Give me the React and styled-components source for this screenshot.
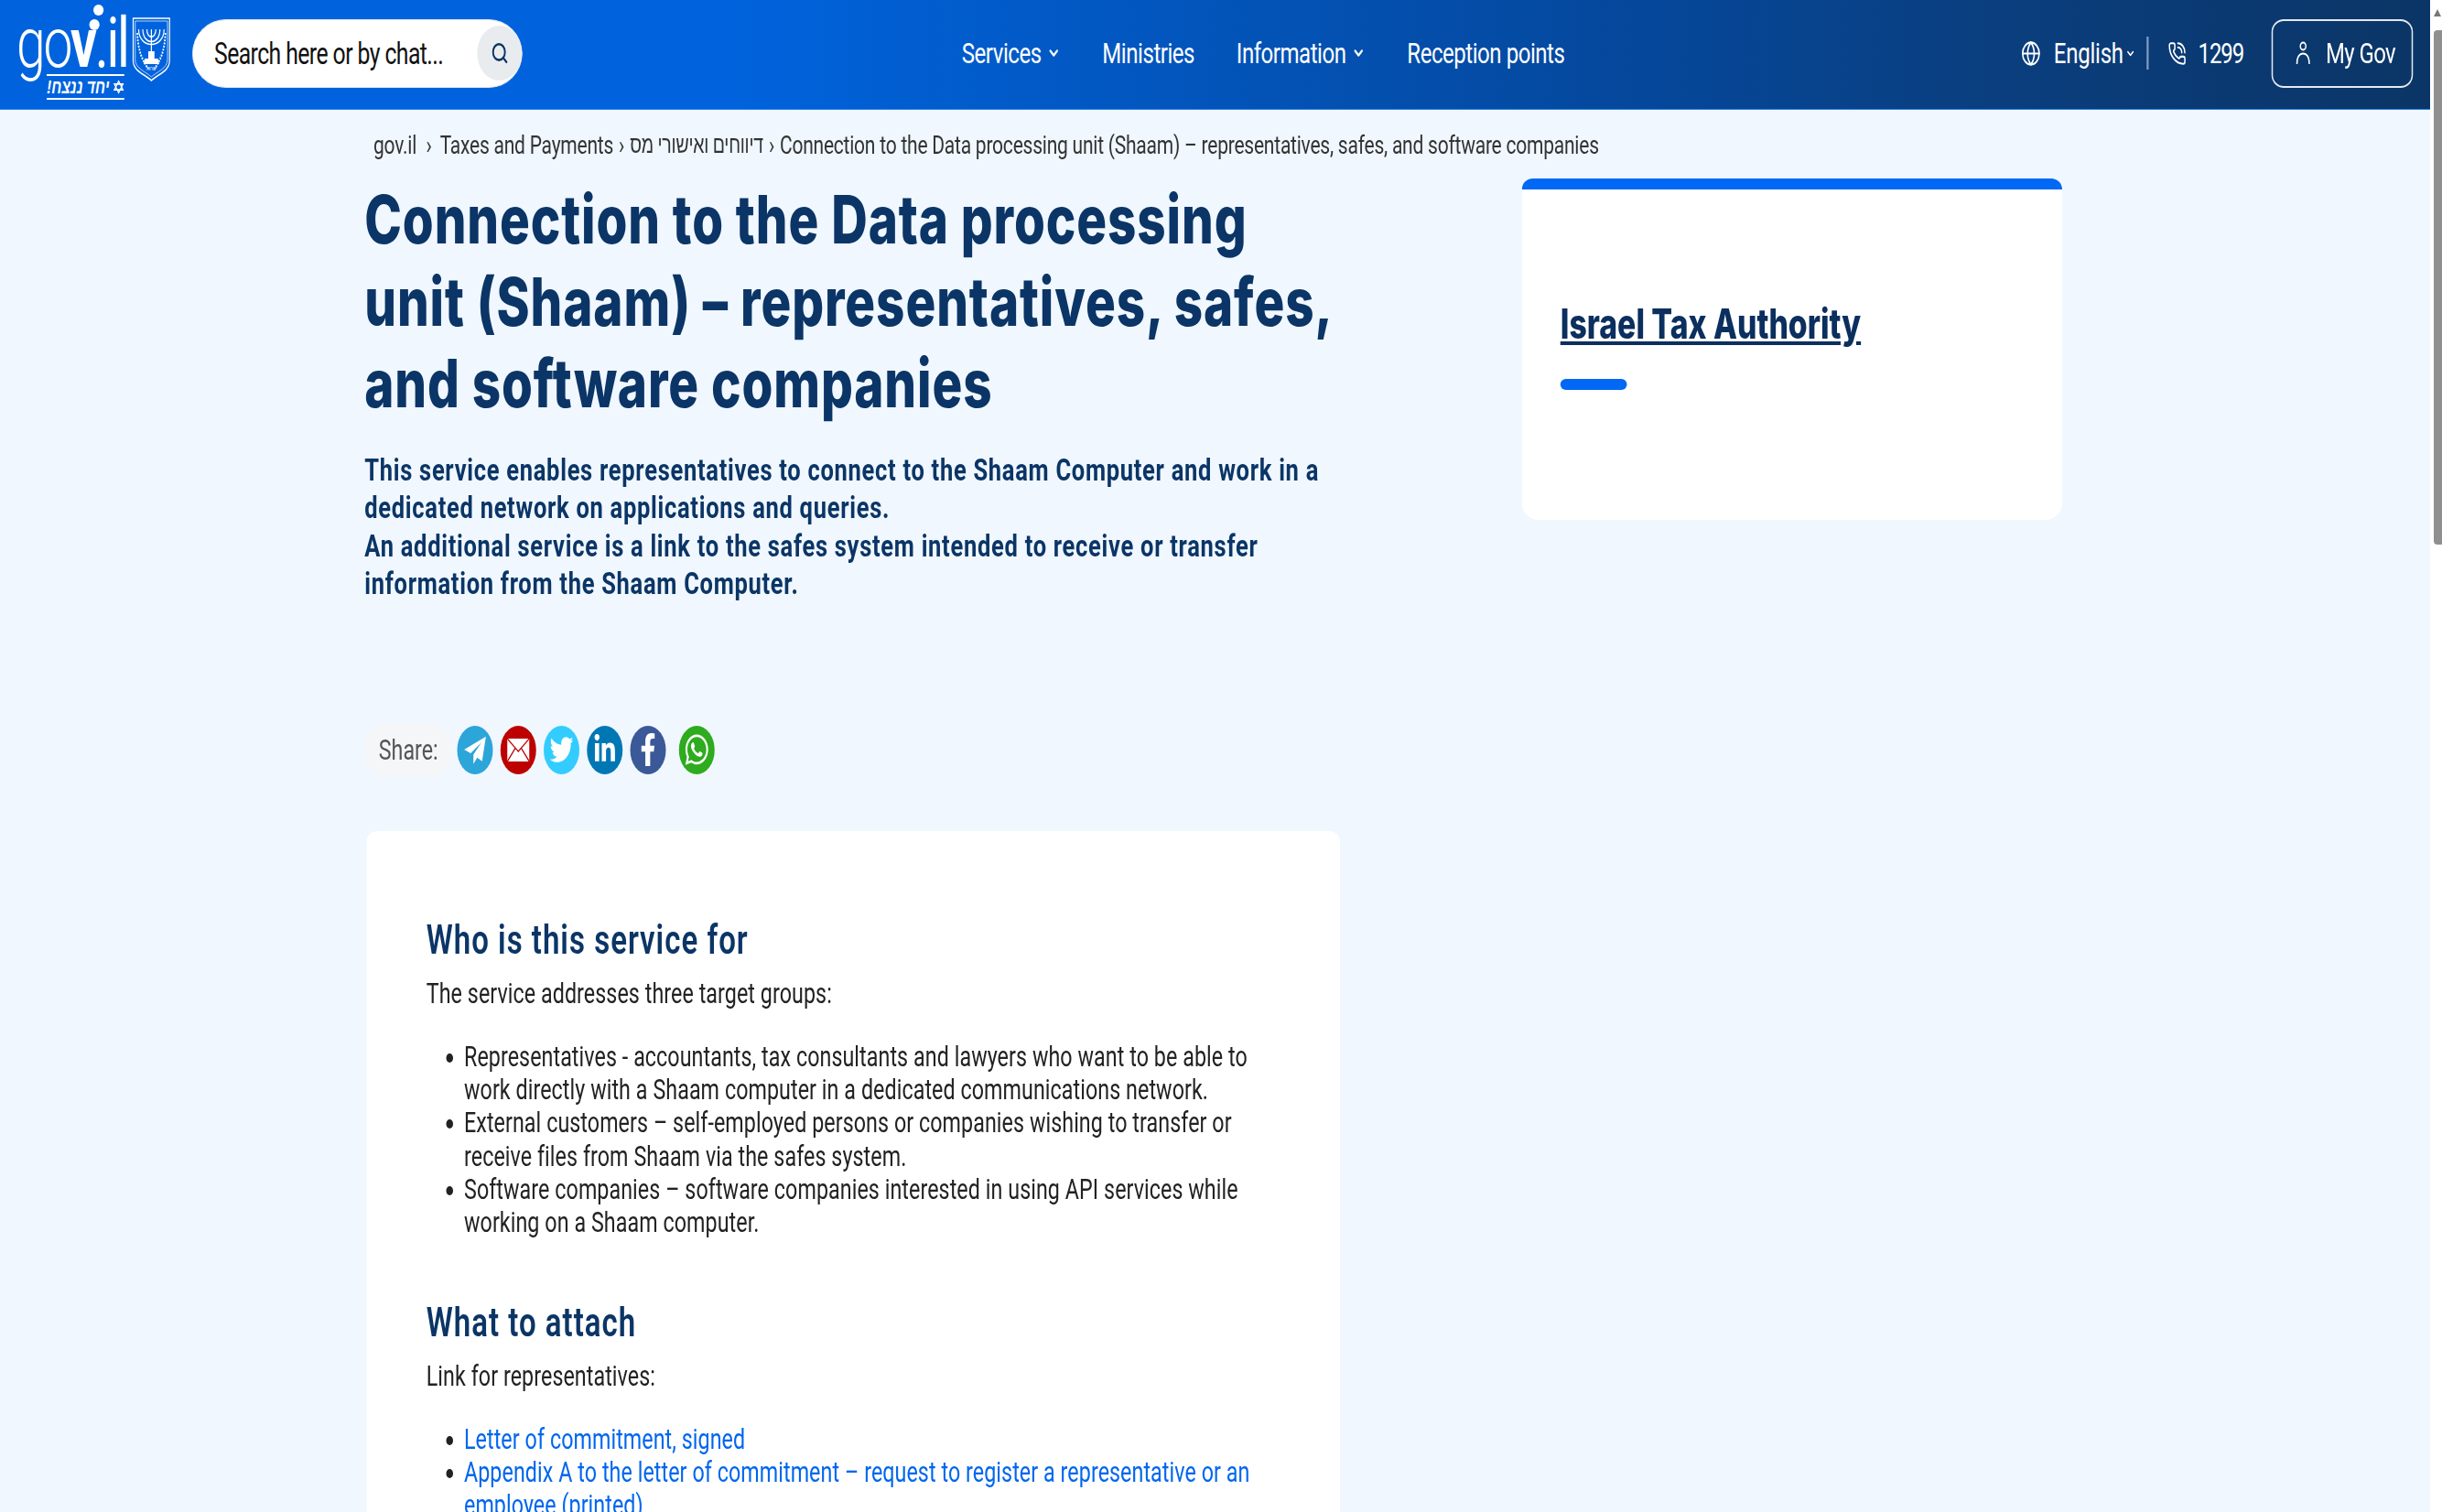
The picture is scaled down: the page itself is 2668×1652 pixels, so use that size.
import styled, { createGlobalStyle } from "styled-components";
import { ChevronDown, Globe, PhoneCall, Search } from "lucide-react";
import { FaFacebookF, FaLinkedinIn, FaTwitter, FaWhatsapp } from "react-icons/fa";

const Global = createGlobalStyle`
  html, body {
    margin: 0;
    overflow: hidden;
    background: #fff;
  }
  * {
    box-sizing: border-box;
  }
`;

function Emblem() {
  return (
    <EmblemSvg viewBox="0 0 57 71" preserveAspectRatio="none" fill="none" stroke="#fff">
      <path d="M2 2H55V48C55 60 38 63 28.5 70C19 63 2 60 2 48Z" strokeWidth="1.6" />
      <path d="M5 5H52V47C52 57 37 60 28.5 66C20 60 5 57 5 47Z" strokeWidth="0.8" />
      <path d="M28.5 14V38M22 14C22 25 35 25 35 14M16 14C16 32 41 32 41 14M10 14C10 36 47 36 47 14" strokeWidth="1.6" />
      <path d="M19 46H38L40 52H17ZM24 38H33V46H24Z" fill="#fff" stroke="none" />
      <path d="M8 18C9 34 13 46 24 57M49 18C48 34 44 46 33 57" strokeWidth="2.4" strokeDasharray="2 1.5" />
      <text x="28.5" y="59" textAnchor="middle" fontSize="6" fill="#fff" stroke="none" fontFamily="Liberation Sans, sans-serif">ישראל</text>
    </EmblemSvg>
  );
}

function MailIcon() {
  return (
    <svg width="38" height="30" viewBox="0 0 34 30">
      <rect x="1" y="3" width="32" height="25" fill="#fff" />
      <path d="M1 3L17 17L33 3M1 28L13 13M33 28L21 13" stroke="#bd0000" strokeWidth="1.6" fill="none" />
    </svg>
  );
}

function PlaneIcon() {
  return (
    <svg width="42" height="38" viewBox="0 0 24 24">
      <path d="M22 3L2 12L8 14.5L18 7L10.5 15.5V22L14 17.5L18.5 20Z" fill="#fff" />
    </svg>
  );
}

function UserIcon() {
  return (
    <svg width="22" height="26" viewBox="0 0 22 26" fill="none" stroke="#fff" strokeWidth="2">
      <circle cx="11" cy="5.5" r="4" />
      <path d="M2 25C2 17 6 13.5 11 13.5C16 13.5 20 17 20 25" />
    </svg>
  );
}

function Star() {
  return (
    <svg width="20" height="18" viewBox="0 0 20 18" fill="none" stroke="#fff" strokeWidth="2">
      <path d="M10 1L18 13H2Z M10 17L2 5H18Z" />
    </svg>
  );
}

const shares = [
  { color: "#2ca5d9", icon: <PlaneIcon /> },
  { color: "#bd0000", icon: <MailIcon /> },
  { color: "#33ccff", icon: <FaTwitter size={34} /> },
  { color: "#0077b5", icon: <FaLinkedinIn size={34} /> },
  { color: "#3b5998", icon: <FaFacebookF size={36} /> },
  { color: "#2eab1e", icon: <FaWhatsapp size={38} />, wide: true },
];

export default function App() {
  return (
    <Shell>
      <Global />
      <Viewport>
        <Page>
          <Header>
            <Logo>
              <Mark>
                <GovText>
                  <Thin>go</Thin>
                  <Bold>v</Bold>
                  <Thin $il>.il</Thin>
                  <Dot />
                  <Dot upper />
                </GovText>
                <Tag>
                  <span dir="rtl">יחד ננצח!</span>
                  <Star />
                </Tag>
              </Mark>
              <Emblem />
            </Logo>
            <SearchBox>
              <SearchLabel>Search here or by chat...</SearchLabel>
              <SearchButton>
                <Search size={26} strokeWidth={2.4} />
              </SearchButton>
            </SearchBox>
            <Nav>
              <NavItem>
                Services <ChevronDown size={20} strokeWidth={3} />
              </NavItem>
              <NavItem>Ministries</NavItem>
              <NavItem>
                Information <ChevronDown size={20} strokeWidth={3} />
              </NavItem>
              <NavItem>Reception points</NavItem>
            </Nav>
            <Tools>
              <Globe size={29} strokeWidth={1.8} />
              <Lang>
                English <ChevronDown size={15} strokeWidth={3} />
              </Lang>
              <Divider />
              <PhoneCall size={27} strokeWidth={1.8} />
              <Phone>1299</Phone>
              <GovButton>
                <UserIcon />
                My Gov
              </GovButton>
            </Tools>
          </Header>

          <Main>
            <Breadcrumb>
              <span>gov.il</span>
              <Sep first>›</Sep>
              <span>Taxes and Payments</span>
              <Sep>›</Sep>
              <HebrewCrumb>דיווחים ואישורי מס</HebrewCrumb>
              <Sep>›</Sep>
              <span>Connection to the Data processing unit (Shaam) – representatives, safes, and software companies</span>
            </Breadcrumb>
            <Columns>
              <div>
                <Title>Connection to the Data processing unit (Shaam) – representatives, safes, and software companies</Title>
                <Lead>
                  This service enables representatives to connect to the Shaam Computer and work in a dedicated network on applications and queries.
                  <br />
                  An additional service is a link to the safes system intended to receive or transfer information from the Shaam Computer.
                </Lead>
                <ShareRow>
                  <ShareLabel>Share:</ShareLabel>
                  {shares.map((s) => (
                    <ShareIcon key={s.color} $color={s.color} $wide={s.wide}>
                      {s.icon}
                    </ShareIcon>
                  ))}
                </ShareRow>
                <Card>
                  <SectionTitle>Who is this service for</SectionTitle>
                  <Para>The service addresses three target groups:</Para>
                  <List>
                    <li>Representatives - accountants, tax consultants and lawyers who want to be able to work directly with a Shaam computer in a dedicated communications network.</li>
                    <li>External customers – self-employed persons or companies wishing to transfer or receive files from Shaam via the safes system.</li>
                    <li>Software companies – software companies interested in using API services while working on a Shaam computer.</li>
                  </List>
                  <SectionTitle $next>What to attach</SectionTitle>
                  <Para>Link for representatives:</Para>
                  <List>
                    <li>
                      <DocLink>Letter of commitment, signed</DocLink>
                    </li>
                    <li>
                      <DocLink>Appendix A to the letter of commitment – request to register a representative or an employee (printed)</DocLink>
                    </li>
                  </List>
                </Card>
              </div>
              <Side>
                <SideBar />
                <SideTitle>Israel Tax Authority</SideTitle>
                <SideMark />
              </Side>
            </Columns>
          </Main>
        </Page>
      </Viewport>
      <ScrollRail>
        <ScrollArrow />
        <ScrollThumb />
      </ScrollRail>
    </Shell>
  );
}

const Shell = styled.div`
  display: flex;
  height: 100vh;
  overflow: hidden;
  background: #fff;
`;

const Viewport = styled.div`
  width: 2655px;
  flex-shrink: 0;
  overflow: hidden;
  background: #f0f7ff;
`;

const ScrollRail = styled.div`
  display: flex;
  flex-direction: column;
  flex: 1;
  padding: 10px 0 0 4px;
`;

const ScrollArrow = styled.i`
  width: 0;
  height: 0;
  border-left: 4.5px solid transparent;
  border-right: 4.5px solid transparent;
  border-bottom: 8px solid #777;
`;

const ScrollThumb = styled.div`
  height: 562px;
  margin-top: 15px;
  background: #8f8f8f;
  border-radius: 4px 0 0 4px;
`;

/* the reference is squeezed sideways, everything below is laid out at full width */
const Page = styled.div`
  width: 3540px;
  transform: scaleX(0.75);
  transform-origin: 0 0;
  font-family: Roboto, "Noto Sans", "Liberation Sans", sans-serif;
  color: #222;
`;

const Header = styled.header`
  display: flex;
  align-items: center;
  height: 120px;
  padding: 0 25px 3px 24px;
  background: linear-gradient(90deg, #0063dd 0%, #0063dd 30%, #05479a 68%, #0a3f80 81%, #0b3566 100%);
  border-bottom: 1px solid #2f80e6;
  color: #fff;
`;

const Logo = styled.a`
  display: flex;
  align-items: flex-start;
  gap: 10px;
  height: 119px;
  width: 225px;
  margin-top: 2px;
`;

const Mark = styled.div`
  display: flex;
  flex-direction: column;
  width: 158px;
  padding-top: 11px;
`;

const GovText = styled.div`
  position: relative;
  height: 70px;
  font-size: 76px;
  line-height: 72px;
  letter-spacing: -3px;
  white-space: nowrap;
`;

const Thin = styled.span`
  font-weight: ${({ $il }) => ($il ? 400 : 300)};
`;

const Bold = styled.span`
  font-weight: 700;
`;

const Dot = styled.i`
  position: absolute;
  left: ${({ upper }) => (upper ? "112px" : "106px")};
  top: ${({ upper }) => (upper ? "-6px" : "10px")};
  width: 15px;
  height: 12px;
  border-radius: 50%;
  background: #fff;
`;

const Tag = styled.div`
  display: flex;
  align-items: center;
  justify-content: flex-end;
  gap: 6px;
  width: 113px;
  margin-left: 44px;
  height: 28px;
  border-top: 2px solid #fff;
  border-bottom: 2px solid #fff;
  font-family: "Liberation Sans", sans-serif;
  font-size: 21px;
  font-weight: 700;
  font-style: italic;
  white-space: nowrap;
`;

const EmblemSvg = styled.svg`
  width: 57px;
  height: 71px;
  margin-top: 18px;
  flex-shrink: 0;
`;

const SearchBox = styled.div`
  display: flex;
  align-items: center;
  justify-content: space-between;
  width: 481px;
  height: 75px;
  margin-left: 31px;
  padding: 0 0 0 31px;
  background: #fff;
  border-radius: 50px / 38px;
  border: 1px solid #dfe6ee;
`;

const SearchLabel = styled.span`
  font-size: 33px;
  letter-spacing: -0.75px;
  color: #111;
  white-space: nowrap;
`;

const SearchButton = styled.span`
  display: flex;
  align-items: center;
  justify-content: center;
  width: 65px;
  height: 60px;
  border-radius: 50%;
  background: #e9ecef;
  color: #0b3566;
`;

const Nav = styled.nav`
  display: flex;
  align-items: center;
  gap: 61px;
  margin-left: 640px;
`;

const NavItem = styled.a`
  display: flex;
  align-items: center;
  gap: 8px;
  font-size: 32px;
  letter-spacing: -0.6px;
  white-space: nowrap;
`;

const Tools = styled.div`
  display: flex;
  align-items: center;
  margin-left: auto;
`;

const Lang = styled.span`
  display: flex;
  align-items: center;
  gap: 3px;
  margin-left: 19px;
  font-size: 32px;
  letter-spacing: -0.3px;
`;

const Divider = styled.i`
  width: 3px;
  height: 36px;
  margin: 0 28px 0 16px;
  background: #7f9cc4;
`;

const Phone = styled.span`
  margin-left: 17px;
  font-size: 32px;
  letter-spacing: -1.5px;
`;

const GovButton = styled.a`
  display: flex;
  align-items: center;
  gap: 22px;
  width: 206px;
  height: 75px;
  margin-left: 41px;
  padding-left: 33px;
  border: 2px solid #e4e9f0;
  border-radius: 18px / 14px;
  font-size: 32px;
  letter-spacing: -0.8px;
  white-space: nowrap;
`;

const Main = styled.main`
  padding-left: 531px;
`;

const Breadcrumb = styled.div`
  display: flex;
  align-items: center;
  height: 38px;
  margin: 19px 0 18px 13px;
  font-size: 28px;
  letter-spacing: -0.3px;
  color: #333;
  white-space: nowrap;
`;

const HebrewCrumb = styled.bdi`
  font-size: 26px;
`;

const Sep = styled.span`
  margin: ${({ first }) => (first ? "0 12px 0 14px" : "0 8px")};
`;

const Columns = styled.div`
  display: grid;
  grid-template-columns: 1421px 787px;
  column-gap: 265px;
  align-items: start;
`;

const Title = styled.h1`
  margin: 0;
  font-family: Inter, Roboto, sans-serif;
  font-size: 73px;
  line-height: 89.5px;
  font-weight: 800;
  letter-spacing: 1.2px;
  color: #0b3566;
`;

const Lead = styled.p`
  margin: 29px 0 0;
  font-size: 34px;
  line-height: 41.6px;
  font-weight: 700;
  letter-spacing: 0.95px;
  color: #0b3566;
`;

const ShareRow = styled.div`
  display: flex;
  align-items: center;
  gap: 11px;
  margin-top: 132px;
`;

const ShareLabel = styled.span`
  display: flex;
  align-items: center;
  justify-content: center;
  width: 128px;
  height: 57px;
  margin-right: -4px;
  border-radius: 28px;
  background: #f5f6f8;
  font-size: 31px;
  color: #555;
`;

const ShareIcon = styled.a`
  display: flex;
  align-items: center;
  justify-content: center;
  width: 52px;
  height: 53px;
  border-radius: 50%;
  color: #fff;
  background: ${({ $color }) => $color};
  margin-left: ${({ $wide }) => ($wide ? "8px" : "0")};
`;

const Card = styled.section`
  margin: 60px 0 0 3px;
  padding: 94px 85px 120px 87px;
  min-height: 3000px;
  background: #fff;
  border-radius: 16px / 12px;
`;

const SectionTitle = styled.h2`
  margin: ${({ $next }) => ($next ? "65px 0 0" : "0")};
  font-size: 44px;
  line-height: 50px;
  font-weight: 600;
  letter-spacing: 1.35px;
  color: #0b3566;
`;

const Para = styled.p`
  margin: 16px 0 0;
  font-size: 31px;
  line-height: 36px;
  letter-spacing: 0.1px;
  color: #222;
`;

const List = styled.ul`
  margin: 33px 0 0;
  padding: 0 0 0 55px;
  font-size: 31px;
  line-height: 36.3px;
  letter-spacing: 0.1px;
  color: #222;
`;

const DocLink = styled.a`
  color: #0066ee;
`;

const Side = styled.aside`
  height: 373px;
  padding-left: 56px;
  background: #fff;
  border-radius: 16px 16px 24px 24px / 12px 12px 18px 18px;
  overflow: hidden;
`;

const SideBar = styled.div`
  height: 12px;
  margin-left: -56px;
  background: #0068f5;
`;

const SideTitle = styled.a`
  display: block;
  margin-top: 122px;
  font-family: Inter, Roboto, sans-serif;
  font-size: 45px;
  line-height: 50px;
  font-weight: 800;
  color: #0b2f5e;
  text-decoration: underline;
`;

const SideMark = styled.div`
  width: 97px;
  height: 12px;
  margin-top: 35px;
  border-radius: 8px / 6px;
  background: #0068f5;
`;
